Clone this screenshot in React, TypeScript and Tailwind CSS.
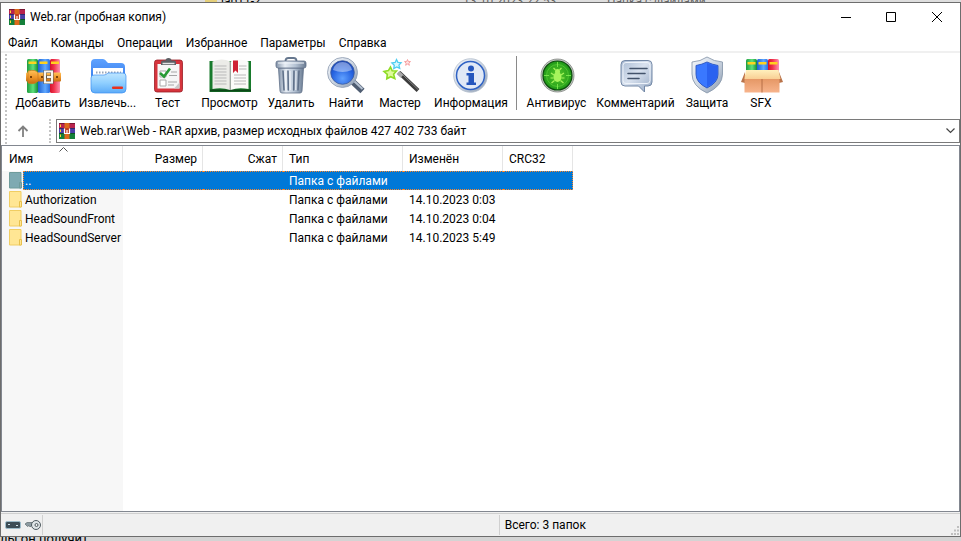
import React from 'react';

const menu = ['Файл', 'Команды', 'Операции', 'Избранное', 'Параметры', 'Справка'];

const files = [
  { name: 'Authorization', type: 'Папка с файлами', modified: '14.10.2023 0:03' },
  { name: 'HeadSoundFront', type: 'Папка с файлами', modified: '14.10.2023 0:04' },
  { name: 'HeadSoundServer', type: 'Папка с файлами', modified: '14.10.2023 5:49' }
];

const Gradients: React.FC = () => (
  <svg className="absolute h-0 w-0" aria-hidden="true">
    <defs>
      <linearGradient id="green">
        <stop offset="0" stopColor="#1f9d3f" />
        <stop offset="0.55" stopColor="#5fe07c" />
        <stop offset="1" stopColor="#128a36" />
      </linearGradient>
      <linearGradient id="blue">
        <stop offset="0" stopColor="#1d5fd0" />
        <stop offset="0.6" stopColor="#5fa8ff" />
        <stop offset="1" stopColor="#2a6fe0" />
      </linearGradient>
      <linearGradient id="red">
        <stop offset="0" stopColor="#d3122c" />
        <stop offset="0.4" stopColor="#f0324a" />
        <stop offset="1" stopColor="#ff8fb0" />
      </linearGradient>
      <linearGradient id="belt" x2="0" y2="1">
        <stop offset="0" stopColor="#ffc25a" />
        <stop offset="0.5" stopColor="#f0982c" />
        <stop offset="1" stopColor="#c66c10" />
      </linearGradient>
      <linearGradient id="folderBack" x2="0" y2="1">
        <stop offset="0" stopColor="#5ea2ff" />
        <stop offset="1" stopColor="#2368e0" />
      </linearGradient>
      <linearGradient id="folderFront" x2="0" y2="1">
        <stop offset="0" stopColor="#bfe6ff" />
        <stop offset="0.5" stopColor="#8fcfff" />
        <stop offset="1" stopColor="#5cabf8" />
      </linearGradient>
      <linearGradient id="steel">
        <stop offset="0" stopColor="#8292a8" />
        <stop offset="0.3" stopColor="#e8eef5" />
        <stop offset="0.65" stopColor="#b4c2d3" />
        <stop offset="1" stopColor="#6a7b92" />
      </linearGradient>
      <linearGradient id="silver" x2="1" y2="1">
        <stop offset="0" stopColor="#f4f7fb" />
        <stop offset="0.5" stopColor="#cdd6e2" />
        <stop offset="1" stopColor="#8797ad" />
      </linearGradient>
      <radialGradient id="lens" cx="0.5" cy="0.75" r="0.75">
        <stop offset="0" stopColor="#5fa0ff" />
        <stop offset="0.6" stopColor="#2663e0" />
        <stop offset="1" stopColor="#1741b0" />
      </radialGradient>
      <radialGradient id="radar">
        <stop offset="0" stopColor="#58c92a" />
        <stop offset="1" stopColor="#1f9a18" />
      </radialGradient>
      <linearGradient id="bubble" x2="1" y2="1">
        <stop offset="0" stopColor="#a9bbd3" />
        <stop offset="0.45" stopColor="#d9e2ef" />
        <stop offset="1" stopColor="#96a9c4" />
      </linearGradient>
      <linearGradient id="carton" x2="0" y2="1">
        <stop offset="0" stopColor="#e08f5a" />
        <stop offset="1" stopColor="#f7b48c" />
      </linearGradient>
      <linearGradient id="flap" x2="0" y2="1">
        <stop offset="0" stopColor="#fff0bd" />
        <stop offset="1" stopColor="#f9cf94" />
      </linearGradient>
    </defs>
  </svg>
);

const AddIcon = (
  <>
    <rect x="6" y="4" width="11" height="34" rx="1.5" fill="url(#green)" />
    <rect x="17" y="4" width="12" height="34" rx="1.5" fill="url(#blue)" />
    <rect x="29" y="4" width="10" height="34" rx="1.5" fill="url(#red)" />
    <path d="M7.500 6.500h8V9h-8zM18.500 6.500h8V9h-8zM30 6.500h8V9h-8z" fill="#ffd21f" />
    <rect x="5" y="17.500" width="35" height="9" rx="1" fill="url(#belt)" />
    <path d="M7 16q8-2 10 2v8q-3 4-10 2z" fill="url(#belt)" stroke="#c9791a" strokeWidth="0.7" />
    <path d="M9 21h2v2H9zM20 21h2v2h-2zM35 21h2v2h-2z" fill="#7b4208" />
    <path d="M31 16.500h-7v11h7zM24.500 22h6" fill="none" stroke="#5a5a5a" strokeWidth="3" />
    <path d="M31 16.500h-7v11h7zM26 22h5" fill="none" stroke="#f7f4ee" strokeWidth="2" />
  </>
);

const ExtractIcon = (
  <>
    <path d="M5 36V8q0-4 4-4h8q2 0 4 3l1 1h13q4 0 4 4v24z" fill="url(#folderBack)" />
    <path d="M7 13h30v14H7z" fill="#fff" />
    <path d="M10 17.500h25" stroke="#97a5b8" strokeWidth="2" strokeDasharray="1.500 1.500" />
    <path
      d="M5 34V23q0-3 3-3h10q2 0 4-2h15q3 0 3 3v13q0 4-4 4H9q-4 0-4-4z"
      fill="url(#folderFront)"
      stroke="#3c8ff0"
      strokeWidth="0.700"
    />
    <rect x="26" y="31.500" width="11" height="2.500" rx="1" fill="#e8321e" />
  </>
);

const TestIcon = (
  <>
    <rect x="8.500" y="5" width="28" height="32" rx="2.500" fill="#d6343c" stroke="#9a1d25" strokeWidth="0.800" />
    <path d="M11.500 9h22v24.500h-22z" fill="#f6f6f6" />
    <path d="M28 33.500l5.500-6v6z" fill="#c9c9c9" />
    <path d="M15 10V7.500q0-2 2-2h2.500q0-2.500 3-2.500t3 2.500H28q2 0 2 2V10z" fill="#5c5f64" />
    <path d="M16.500 8.500h12" stroke="#e3e3e3" strokeWidth="1.500" />
    <path d="M14 16h6v6h-6zM14 25h6v6h-6z" fill="#fff" stroke="#a9a9a9" />
    <path d="M14 18l4 3.500 6-8" fill="none" stroke="#279a35" strokeWidth="2.600" />
    <path d="M25 17h6M23 20.500h8M22 27h9M22 30h6" stroke="#a5a5a5" strokeWidth="1.200" />
  </>
);

const ViewIcon = (
  <>
    <path d="M1.500 6H43v31H1.500z" fill="#187a2c" />
    <path d="M2 35.500h41" stroke="#0c4717" strokeWidth="2" />
    <path d="M4.500 6.500q10-4 17.500 0v28.500q-8-3-17.500-1z" fill="#ecece8" />
    <path d="M40.500 6.500q-10-4-18 0v28.500q8-3 18-1z" fill="#fbfbf9" />
    <path d="M22.200 7v28" stroke="#a5a5a5" strokeWidth="1.200" />
    <path
      d="M6.500 11h12M6.500 14h12M6.500 17h12M6.500 20h12M6.500 23h12M6.500 26h12M6.500 29h12M31 11h7.500M31 14h7.500M26 20h12M26 23h12M26 26h12M26 29h12"
      stroke="#b9b9b9"
      strokeWidth="1"
    />
    <path d="M25 5.500h5v12.500l-2.500-2.500-2.500 2.500z" fill="#cf2334" />
  </>
);

const DeleteIcon = (
  <>
    <path d="M16.500 6q0-3 3-3h5q3 0 3 3" fill="none" stroke="#66778e" strokeWidth="1.800" />
    <path d="M9.500 13h25l-1.500 23q-.2 2-2 2H13q-1.800 0-2-2z" fill="url(#steel)" stroke="#5f7088" strokeWidth="0.800" />
    <path d="M14 16l1 19M19 16l.3 19M25 16l-.3 19M30 16l-1 19" stroke="#60718a" strokeWidth="1.600" strokeLinecap="round" />
    <path d="M16 16l.8 19M21 16l.2 19M27 16l-.2 19" stroke="#f2f6fb" strokeWidth="1" />
    <rect x="7" y="6" width="30" height="7" rx="2" fill="url(#steel)" stroke="#5f7088" strokeWidth="0.800" />
    <path d="M9 8h26" stroke="#f2f6fb" />
  </>
);

const FindIcon = (
  <>
    <path d="M29 27l9.500 9" stroke="#4f5d72" strokeWidth="6" />
    <path d="M30 26l8.500 8" stroke="#b5c1d1" strokeWidth="2" />
    <circle cx="18.500" cy="17.500" r="15" fill="url(#silver)" stroke="#8d9bb0" strokeWidth="0.800" />
    <circle cx="18.500" cy="17.500" r="11.800" fill="url(#lens)" stroke="#3d5c9c" strokeWidth="0.800" />
    <path d="M9 15q2-8 9.500-8t9.500 8q-9.500 4-19 0z" fill="#fff" fillOpacity="0.4" />
  </>
);

const WizardIcon = (
  <>
    <path d="M21 17.500l19 18" stroke="#3c3c3c" strokeWidth="4" />
    <path d="M20 17.500l4 3.800" stroke="#a8a8a8" strokeWidth="4" />
    <path d="M25 20l15 14.500" stroke="#858585" strokeWidth="1" />
    <path
      d="M12.500 12l1.700 3.800 4.300.2-2.900 3.200 1.200 4.300-4.100-1.800-3.900 2.100.5-4.500-3.300-2.800 4.400-.9z"
      fill="#dffb9b"
      stroke="#8fdc26"
      strokeWidth="1.600"
    />
    <path
      d="M18.500 4.500l1.400 2.900 3.200.3-2.200 2.400.8 3.300-3-1.500-2.900 1.600.5-3.300-2.400-2.300 3.300-.5z"
      fill="#d9f8ff"
      stroke="#4fcdf0"
      strokeWidth="1.300"
    />
    <path
      d="M29.500 4.500l.8 2 2.200.1-1.700 1.500.6 2.200-1.900-1.200-1.900 1.200.6-2.200-1.700-1.500 2.200-.1z"
      fill="#ffe3e3"
      stroke="#f59a9a"
      strokeWidth="0.900"
    />
  </>
);

const InfoIcon = (
  <>
    <circle cx="21.500" cy="20.500" r="16.800" fill="url(#silver)" stroke="#b1bccb" strokeWidth="0.800" />
    <circle cx="21.500" cy="20.500" r="14" fill="#e1e9f6" stroke="#2f62c4" strokeWidth="1.500" />
    <circle cx="22" cy="13.500" r="3" fill="#2556bd" />
    <path d="M17.500 18H25v9.500h2V30h-9.500v-2.500h2v-7h-2z" fill="#2556bd" />
  </>
);

const VirusIcon = (
  <>
    <circle cx="22.500" cy="20.500" r="16.500" fill="#c2c6c2" stroke="#7d837d" strokeWidth="0.800" />
    <circle cx="22.500" cy="20.500" r="14.500" fill="url(#radar)" stroke="#0b4a0c" strokeWidth="1.200" />
    <circle cx="22.500" cy="20.500" r="11" fill="none" stroke="#7bea4d" strokeWidth="0.700" strokeOpacity="0.6" />
    <path d="M22.500 7v5M22.500 29v5M9 20.500h5M31 20.500h5" stroke="#7bea4d" strokeWidth="0.900" />
    <ellipse cx="22.500" cy="22" rx="4" ry="5" fill="#a6f45c" />
    <circle cx="22.500" cy="16.500" r="2.500" fill="#a6f45c" />
    <path
      d="M20.500 15l-2-2M24.500 15l2-2M19 20l-3-2M26 20l3-2M18.500 23h-3M26.500 23h3M19.500 25.500l-3 2.500M25.500 25.500l3 2.500"
      stroke="#a6f45c"
      strokeWidth="1.200"
    />
  </>
);

const CommentIcon = (
  <>
    <path
      d="M11 5.500h23q4 0 4 4V27q0 4-4 4h-3.500v6l-6-6H11q-4 0-4-4V9.500q0-4 4-4z"
      fill="url(#bubble)"
      stroke="#7388a6"
    />
    <rect x="9" y="7.500" width="27" height="21" rx="3" fill="none" stroke="#eef3fa" strokeWidth="1" />
    <path d="M16 13.500h17M14 18.500h17M14 23.500h11" stroke="#43536b" strokeWidth="1.600" strokeLinecap="round" />
  </>
);

const ProtectIcon = (
  <>
    <path d="M22 2q7 4.500 15.500 5v12q0 12-15.500 19Q7 31 7 19V7q8.500-.5 15-5z" fill="url(#silver)" stroke="#8b9bae" strokeWidth="0.900" />
    <path d="M22 7q5 2.500 11 3.500v9q0 8-11 13.500-11-5.500-11-13.500v-9q6-1 11-3.500z" fill="#3a78ff" stroke="#2a55c0" strokeWidth="0.900" />
    <path d="M22 8q5 2.500 10.500 3.300v8q0 7.500-10.500 12.700z" fill="#2a62f0" />
  </>
);

const SfxIcon = (
  <>
    <rect x="7" y="4" width="11" height="15" rx="1.500" fill="url(#green)" />
    <rect x="18" y="4" width="11" height="15" rx="1.500" fill="url(#blue)" />
    <rect x="29" y="4" width="11" height="15" rx="1.500" fill="url(#red)" />
    <path d="M8.500 7h8v2.500h-8zM19.500 7h8v2.500h-8zM30.500 7h8v2.500h-8z" fill="#ffd21f" />
    <path d="M6 17l-4 10 4 1zM40 17l4 10-4 1z" fill="#b9734a" />
    <path d="M5.500 20h35v17.500h-35z" fill="url(#carton)" />
    <path d="M23 24v13.500" stroke="#b06a42" strokeWidth="0.900" />
    <path d="M7 15h32.500l2 9h-36z" fill="url(#flap)" />
  </>
);

const tools = [
  { label: 'Добавить', width: 'w-[66px]', icon: AddIcon },
  { label: 'Извлечь...', width: 'w-[63px]', icon: ExtractIcon },
  { label: 'Тест', width: 'w-[57px]', icon: TestIcon },
  { label: 'Просмотр', width: 'w-[67px]', icon: ViewIcon },
  { label: 'Удалить', width: 'w-[56px]', icon: DeleteIcon },
  { label: 'Найти', width: 'w-[54px]', icon: FindIcon },
  { label: 'Мастер', width: 'w-[54px]', icon: WizardIcon },
  { label: 'Информация', width: 'w-[88px]', icon: InfoIcon }
];

const extraTools = [
  { label: 'Антивирус', width: 'w-[75px]', icon: VirusIcon },
  { label: 'Комментарий', width: 'w-[83px]', icon: CommentIcon },
  { label: 'Защита', width: 'w-[60px]', icon: ProtectIcon },
  { label: 'SFX', width: 'w-[48px]', icon: SfxIcon }
];

const ToolButton: React.FC<{ label: string; width: string; icon: React.ReactNode }> = ({ label, width, icon }) => (
  <button type="button" className={`${width} flex shrink-0 flex-col items-center whitespace-nowrap`}>
    <svg width="44" height="40" viewBox="0 0 44 40" aria-hidden="true">
      {icon}
    </svg>
    <span className="leading-4">{label}</span>
  </button>
);

const RarLogo: React.FC = () => (
  <svg width="16" height="16" viewBox="0 0 16 16" className="shrink-0" aria-hidden="true">
    <rect width="16" height="5" fill="#b8234e" />
    <rect y="5" width="16" height="5" fill="#4a3fa8" />
    <rect y="10" width="16" height="6" fill="#14803a" />
    <path d="M0 .5h16M0 5.500h16M0 10.500h16" stroke="#000" strokeOpacity="0.35" />
    <path d="M1 1.500h1v2.500H1zM1 6.500h1V9H1zM1 11.500h1V14H1z" fill="#ffd93b" />
    <path d="M5.500 0h5v16h-5z" fill="#dd6a1c" />
    <path d="M5 5h6v6H5z" fill="#c23f22" />
    <path d="M5.500 5.500v5h5v-5M8 7v3" fill="none" stroke="#fff" strokeWidth="1.200" />
  </svg>
);

const FolderIcon: React.FC<{ up?: boolean }> = ({ up }) => (
  <svg width="14" height="17" viewBox="0 0 14 17" className="shrink-0" aria-hidden="true">
    <path d="M.5.500h11.500v15.500H.5z" fill={up ? '#7eaab2' : '#ffe694'} stroke={up ? '#6f9c9c' : '#f0cd62'} />
    <path d="M10.500 10.500h2v5.500h-2z" fill={up ? '#7eaab2' : '#ffe694'} stroke={up ? '#6f9c9c' : '#e8c04c'} />
  </svg>
);

const TitleBar: React.FC = () => (
  <header className="flex h-[31px] items-start">
    <div className="flex h-7 flex-1 items-center gap-[5px] pl-2">
      <RarLogo />
      <h1>Web.rar (пробная копия)</h1>
    </div>
    <button type="button" aria-label="Свернуть" className="flex h-7 w-[45px] items-center justify-center">
      <svg width="10" height="10" viewBox="0 0 10 10"><path d="M0 5.500h10" stroke="#000" /></svg>
    </button>
    <button type="button" aria-label="Развернуть" className="flex h-7 w-[45px] items-center justify-center">
      <svg width="10" height="10" viewBox="0 0 10 10"><path d="M.5.500h9v9h-9z" fill="none" stroke="#000" /></svg>
    </button>
    <button type="button" aria-label="Закрыть" className="flex h-7 w-[47px] items-center justify-center">
      <svg width="10" height="10" viewBox="0 0 10 10"><path d="M0 0l10 10M10 0L0 10" stroke="#000" /></svg>
    </button>
  </header>
);

const FileTable: React.FC = () => (
  <table className="w-[571px] table-fixed border-separate border-spacing-0 text-left">
    <colgroup>
      <col className="w-[121px]" />
      <col className="w-20" />
      <col className="w-20" />
      <col className="w-[120px]" />
      <col className="w-[100px]" />
      <col className="w-[70px]" />
    </colgroup>
    <thead>
      <tr className="h-[25px] *:border-r *:border-[#e5e5e5] *:p-0 *:pr-[5px] *:pl-[6px] *:font-normal">
        <th className="relative">
          <span className="pl-px">Имя</span>
          <svg className="absolute top-px left-[57px]" width="9" height="5" viewBox="0 0 9 5" aria-hidden="true">
            <path d="M.5 4.500l4-4 4 4" fill="none" stroke="#555" />
          </svg>
        </th>
        <th className="text-right">Размер</th>
        <th className="text-right">Сжат</th>
        <th>Тип</th>
        <th>Изменён</th>
        <th>CRC32</th>
      </tr>
    </thead>
    <tbody>
      <tr className="h-[19px] text-white">
        <td className="bg-[#f7f7f7] p-0">
          <div className="flex h-[19px] items-center pl-[7px]">
            <FolderIcon up />
            <span className="flex h-[19px] flex-1 items-center border border-r-0 border-dotted border-[#ff8728] bg-[#0078d7] pl-px">..</span>
          </div>
        </td>
        <td className="border-y border-dotted border-[#ff8728] bg-[#0078d7] p-0" />
        <td className="border-y border-dotted border-[#ff8728] bg-[#0078d7] p-0" />
        <td className="border-y border-dotted border-[#ff8728] bg-[#0078d7] p-0 pl-[6px]">Папка с файлами</td>
        <td className="border-y border-dotted border-[#ff8728] bg-[#0078d7] p-0" />
        <td className="border-y border-r border-dotted border-[#ff8728] bg-[#0078d7] p-0" />
      </tr>
      {files.map((file) => (
        <tr key={file.name} className="h-[19px] whitespace-nowrap">
          <td className="bg-[#f7f7f7] p-0">
            <div className="flex h-[19px] items-center gap-[2px] pl-[7px]">
              <FolderIcon />
              {file.name}
            </div>
          </td>
          <td className="p-0" />
          <td className="p-0" />
          <td className="p-0 pl-[6px]">{file.type}</td>
          <td className="p-0 pl-[6px]">{file.modified}</td>
          <td className="p-0" />
        </tr>
      ))}
      {/* keeps the sorted column tinted down to the bottom of the list */}
      <tr aria-hidden="true">
        <td className="bg-[#f7f7f7] p-0" />
        <td colSpan={5} className="p-0" />
      </tr>
    </tbody>
  </table>
);

const StatusBar: React.FC = () => (
  <footer className="flex h-[23px] items-stretch border-t border-[#d0d0d0] bg-[#f0f0f0]">
    <div className="my-px flex w-[42px] items-center gap-1 border-r border-[#d0d0d0] pl-1">
      <svg width="16" height="8" viewBox="0 0 16 8" aria-hidden="true">
        <rect x=".5" y=".5" width="15" height="7" rx="1.500" fill="#3c4d57" stroke="#9dbccb" />
        <path d="M3 3.500h2M11 4.500h2" stroke="#cfe3ea" />
      </svg>
      <svg width="16" height="12" viewBox="0 0 16 12" aria-hidden="true">
        <path d="M0 5l2-1.500h6v3H6.500L5 8 4 6.500 2.500 7.500z" fill="#8d9ba1" stroke="#4f5b60" strokeWidth="0.600" />
        <circle cx="11" cy="6" r="4.500" fill="#dfe5e7" stroke="#4f5b60" />
        <circle cx="11.500" cy="6" r="1.500" fill="#f0f0f0" stroke="#4f5b60" />
      </svg>
    </div>
    <div className="my-px flex-1 border-r border-[#d0d0d0]" />
    <div className="flex w-[48%] items-center justify-between pl-[5px]">
      <span>Всего: 3 папок</span>
      <svg className="mr-px mb-px self-end" width="9" height="9" viewBox="0 0 9 9" aria-hidden="true">
        <path d="M7 0h2v2H7zM4 3.500h2v2H4zM7 3.500h2v2H7zM1 7h2v2H1zM4 7h2v2H4zM7 7h2v2H7z" fill="#bfbfbf" />
      </svg>
    </div>
  </footer>
);

export default function App() {
  return (
    <div className="flex min-h-screen flex-col bg-[#d4d4d4] font-[Roboto,'Noto_Sans',sans-serif] text-[12px] leading-4 text-black">
      <Gradients />

      {/* slice of the window that lies behind, above this one */}
      <div className="flex h-[2px] items-center overflow-hidden bg-[#dedede] pl-[205px] whitespace-nowrap">
        <span className="mr-1 h-3 w-3 bg-[#e5cf7a]" />
        <span className="w-[242px]">lab11-2</span>
        <span className="w-[144px] text-[#666]">13.10.2023 22:53</span>
        <span className="text-[#666]">Папка с файлами</span>
      </div>

      <div className="flex flex-1 flex-col border border-[#6d6d6d] bg-white">
        <TitleBar />

        <nav className="flex h-[17px] items-center gap-[13px] pl-[7px]">
          {menu.map((item) => (
            <button key={item} type="button">{item}</button>
          ))}
        </nav>

        <div className="flex border-t-2 border-[#f0f0f0] pl-1">
          <div className="my-px w-[5px] shrink-0 border-l-2 border-dotted border-[#c4c4c4]" />
          <div className="min-w-0 flex-1">
            <div className="flex h-[63px] items-start overflow-hidden pt-[2px]">
              {tools.map((tool) => (
                <ToolButton key={tool.label} {...tool} />
              ))}
              <div className="mt-px mr-[2px] ml-px h-[54px] border-l border-[#8a8a8a]" />
              {extraTools.map((tool) => (
                <ToolButton key={tool.label} {...tool} />
              ))}
            </div>

            <div className="flex h-[29px] items-start pt-[3px]">
              <button type="button" aria-label="Вверх" className="flex h-6 w-[39px] items-center pl-[7px]">
                <svg width="12" height="12" viewBox="0 0 12 12">
                  <path d="M6 12V1.500M1.500 6L6 1.500 10.500 6" fill="none" stroke="#808080" strokeWidth="1.800" />
                </svg>
              </button>
              <div className="mr-[5px] h-6 border-l-2 border-dotted border-[#c4c4c4]" />
              <div className="flex h-6 flex-1 items-center gap-[5px] border border-[#7a7a7a] pr-1 pl-[2px]">
                <RarLogo />
                <select aria-label="Путь" className="flex-1 appearance-none bg-transparent outline-none">
                  <option>Web.rar\Web - RAR архив, размер исходных файлов 427 402 733 байт</option>
                </select>
                <svg width="9" height="6" viewBox="0 0 9 6" aria-hidden="true">
                  <path d="M.5.500l4 4 4-4" fill="none" stroke="#444" strokeWidth="1.200" />
                </svg>
              </div>
            </div>
          </div>
        </div>

        <main className="flex flex-1 border border-[#828790]">
          <FileTable />
        </main>

        <div className="h-px bg-[#f0f0f0]" />
        <StatusBar />
      </div>

      {/* slice of the page below */}
      <div className="flex h-1 items-center overflow-hidden whitespace-nowrap text-[13px]">лы он получит.</div>
    </div>
  );
}
